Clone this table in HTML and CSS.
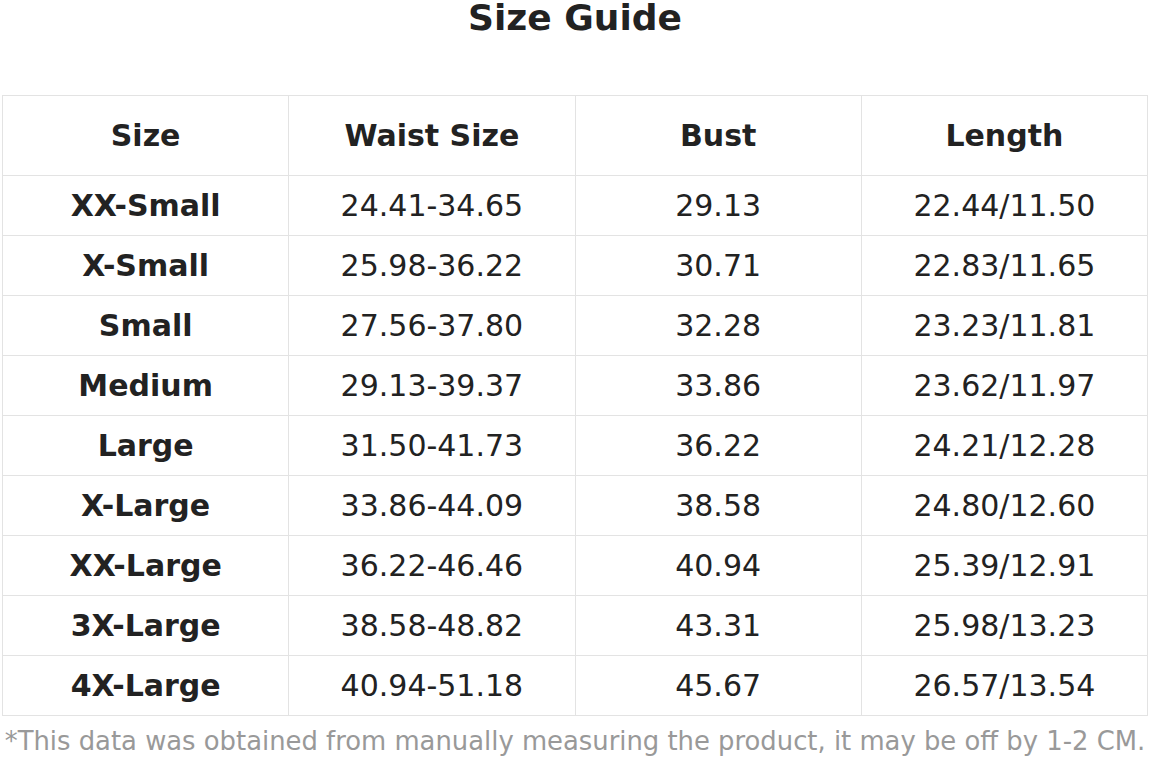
FILE: index.html
```html
<!DOCTYPE html>
<html>
<head>
<meta charset="utf-8">
<link rel="stylesheet" href="styles.css">
</head>
<body>
<div class="page">
  <h1 class="title">Size Guide</h1>
  <table class="sizes">
    <thead>
      <tr><th>Size</th><th>Waist Size</th><th>Bust</th><th>Length</th></tr>
    </thead>
    <tbody>
      <tr><th>XX-Small</th><td>24.41-34.65</td><td>29.13</td><td>22.44/11.50</td></tr>
      <tr><th>X-Small</th><td>25.98-36.22</td><td>30.71</td><td>22.83/11.65</td></tr>
      <tr><th>Small</th><td>27.56-37.80</td><td>32.28</td><td>23.23/11.81</td></tr>
      <tr><th>Medium</th><td>29.13-39.37</td><td>33.86</td><td>23.62/11.97</td></tr>
      <tr><th>Large</th><td>31.50-41.73</td><td>36.22</td><td>24.21/12.28</td></tr>
      <tr><th>X-Large</th><td>33.86-44.09</td><td>38.58</td><td>24.80/12.60</td></tr>
      <tr><th>XX-Large</th><td>36.22-46.46</td><td>40.94</td><td>25.39/12.91</td></tr>
      <tr><th>3X-Large</th><td>38.58-48.82</td><td>43.31</td><td>25.98/13.23</td></tr>
      <tr><th>4X-Large</th><td>40.94-51.18</td><td>45.67</td><td>26.57/13.54</td></tr>
    </tbody>
  </table>
  <p class="note">*This data was obtained from manually measuring the product, it may be off by 1-2 CM.</p>
</div>
</body>
</html>
```
FILE: styles.css
```css
html, body {
  margin: 0;
  padding: 0;
  background: #fff;
}
.page {
  font-family: "DejaVu Sans", Verdana, sans-serif;
  color: #222;
  padding: 0 3px 0 2px;
}
.title {
  margin: 0;
  font-size: 36px;
  font-weight: bold;
  text-align: center;
  line-height: 36px;
  height: 95px;
}
.sizes {
  width: 100%;
  border-collapse: collapse;
  table-layout: fixed;
}
.sizes th, .sizes td {
  border: 1px solid #e3e3e3;
  text-align: center;
  font-size: 30px;
  padding: 0;
  height: 59px;
}
.sizes th {
  font-weight: bold;
}
.sizes td {
  font-weight: normal;
}
.sizes thead th {
  height: 79px;
}
.note {
  margin: 0;
  padding-top: 10px;
  font-size: 25.85px;
  color: #999;
  white-space: nowrap;
  text-align: center;
}
```
